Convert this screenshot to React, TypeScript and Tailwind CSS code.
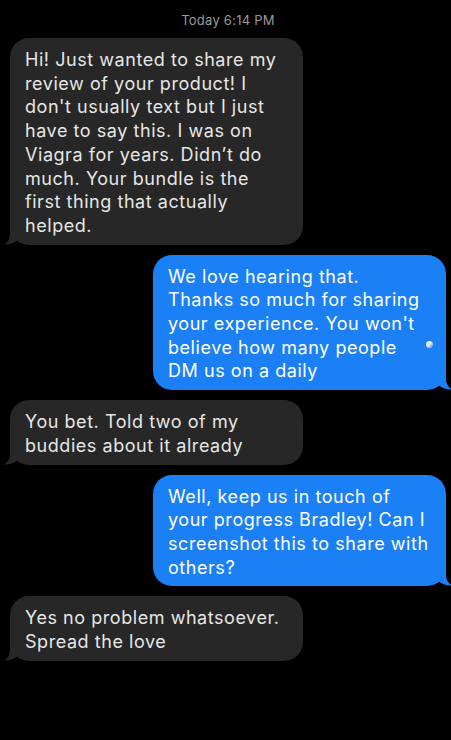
import React from "react";

type Msg = { from: "them" | "me"; lines: string[] };

const msgs: Msg[] = [
  {
    from: "them",
    lines: [
      "Hi! Just wanted to share my",
      "review of your product! I",
      "don't usually text but I just",
      "have to say this. I was on",
      "Viagra for years. Didn’t do",
      "much. Your bundle is the",
      "first thing that actually",
      "helped.",
    ],
  },
  {
    from: "me",
    lines: [
      "We love hearing that.",
      "Thanks so much for sharing",
      "your experience. You won't",
      "believe how many people",
      "DM us on a daily",
    ],
  },
  { from: "them", lines: ["You bet. Told two of my", "buddies about it already"] },
  {
    from: "me",
    lines: [
      "Well, keep us in touch of",
      "your progress Bradley! Can I",
      "screenshot this to share with",
      "others?",
    ],
  },
  { from: "them", lines: ["Yes no problem whatsoever.", "Spread the love"] },
];

function Tail({ side, color }: { side: "left" | "right"; color: string }) {
  if (side === "left") {
    return (
      <svg
        className="absolute bottom-0 left-[-6px]"
        width="18"
        height="20"
        viewBox="0 0 18 20"
      >
        <path
          d="M18 0 L6 0 L6 9 C6 14 3.5 17.5 0 19.5 C5 19.8 9.5 18.5 13 15.5 L18 15.5 Z"
          fill={color}
        />
      </svg>
    );
  }
  return (
    <svg
      className="absolute bottom-0 right-[-6px]"
      width="18"
      height="20"
      viewBox="0 0 18 20"
    >
      <path
        d="M0 0 L12 0 L12 9 C12 14 14.5 17.5 18 19.5 C13 19.8 8.5 18.5 5 15.5 L0 15.5 Z"
        fill={color}
      />
    </svg>
  );
}

export default function App() {
  return (
    <div
      className="w-[451px] h-[740px] bg-black overflow-hidden pt-[12px]"
      style={{ fontFamily: "Inter, 'Noto Sans', sans-serif" }}
    >
      <div className="flex justify-center pl-[5px] h-[16px] mb-[10px]">
        <span className="text-[13px] leading-[16px] tracking-[0.25px] text-[#9a9a9e]">Today 6:14 PM</span>
      </div>
      <div className="flex flex-col gap-[10px]">
        {msgs.map((m, i) => {
          const me = m.from === "me";
          return (
            <div
              key={i}
              className={
                me
                  ? "relative ml-[153px] w-[293px] rounded-[19px] bg-[#1b7ff5] text-white px-[15px] pt-[10px] pb-[7px] text-[18px] leading-[23.7px] tracking-[0.55px]"
                  : "relative ml-[10px] w-[293px] rounded-[19px] bg-[#272727] text-[#e6e6e6] px-[15px] pt-[10px] pb-[7px] text-[18px] leading-[23.7px] tracking-[0.55px]"
              }
            >
              {m.lines.map((l, j) => (
                <div key={j} className="whitespace-nowrap">
                  {l}
                </div>
              ))}
              <Tail side={me ? "right" : "left"} color={me ? "#1b7ff5" : "#272727"} />
              {i === 1 && (
                <span className="absolute left-[273px] top-[86px] w-[7px] h-[7px] rounded-full bg-gradient-to-br from-white via-[#dfe8f5] to-[#4f86d6]" />
              )}
            </div>
          );
        })}
      </div>
    </div>
  );
}
